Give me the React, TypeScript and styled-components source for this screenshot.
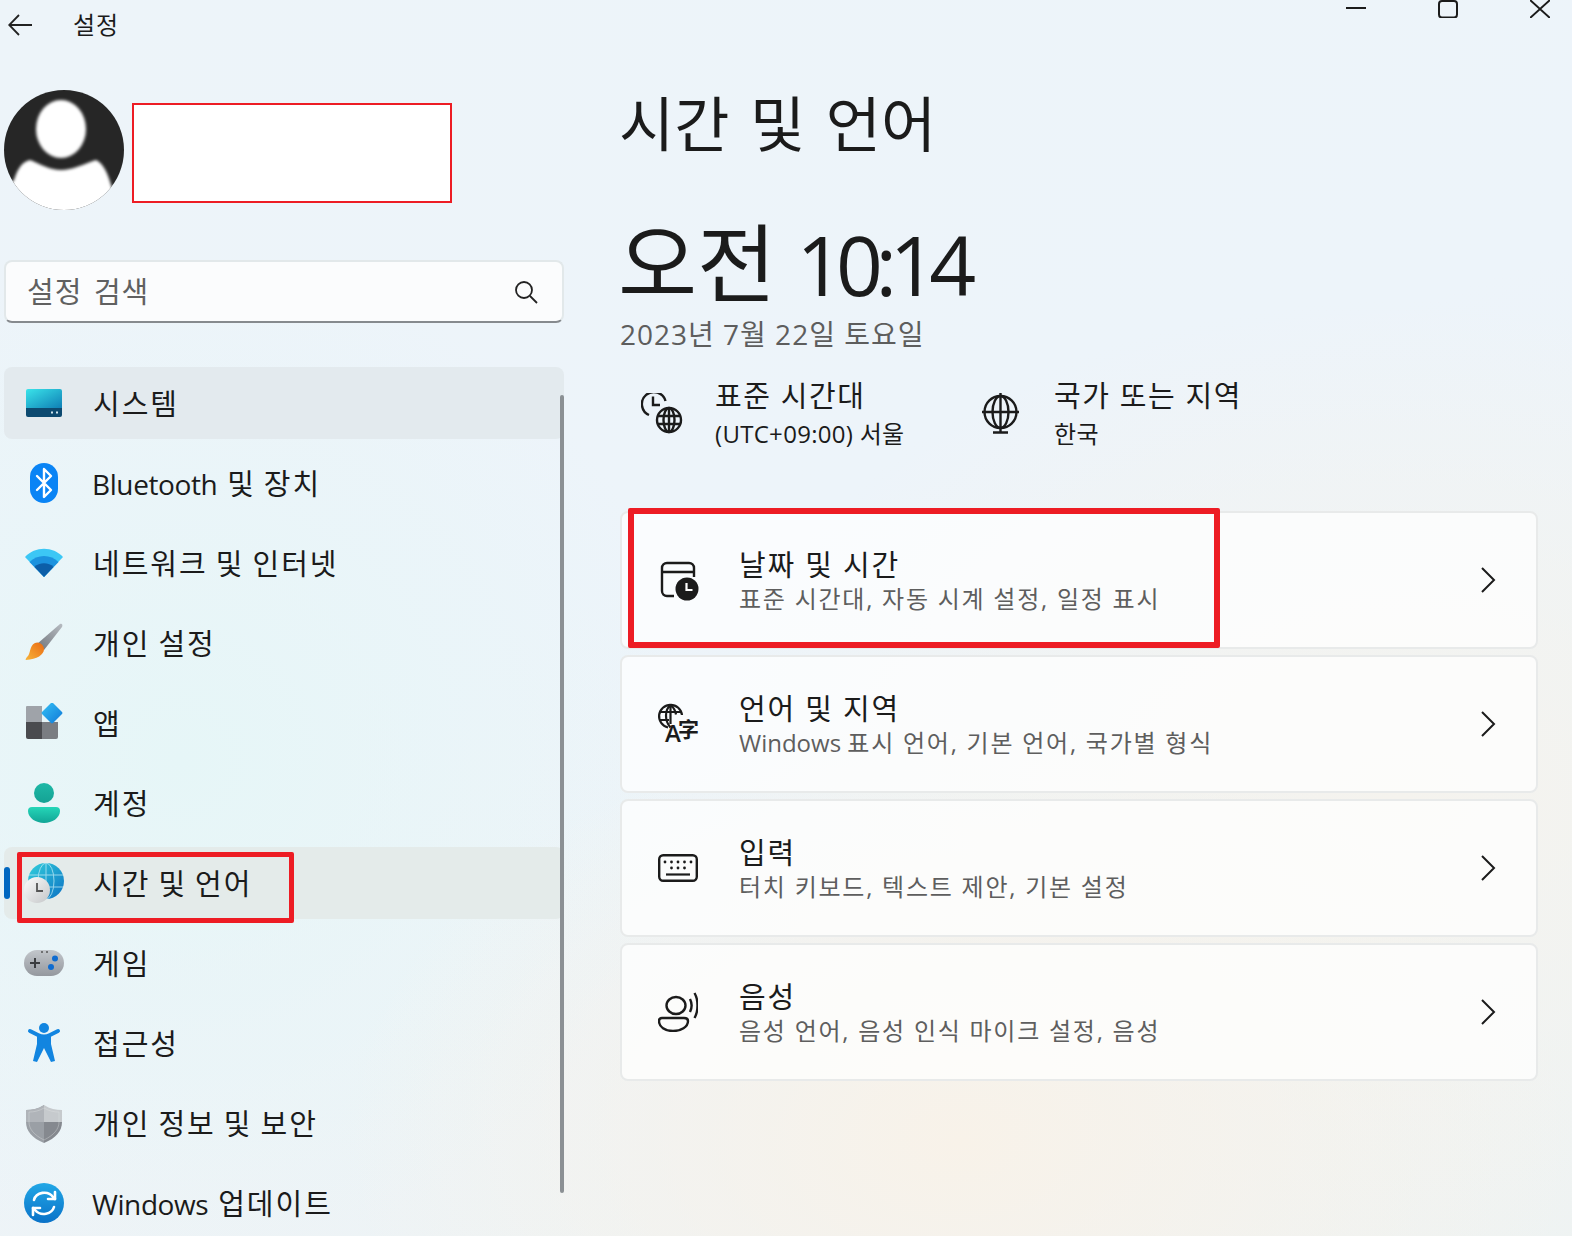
import React, { FC, ReactNode } from 'react';
import styled, { createGlobalStyle } from 'styled-components';

const GlobalStyle = createGlobalStyle`
  html, body {
    margin: 0;
    padding: 0;
  }
  body {
    font-family: "Open Sans", "Noto Sans CJK KR", sans-serif;
    color: #1b1b1b;
  }
`;

const Root = styled.div`
  position: relative;
  width: 1572px;
  height: 1236px;
  overflow: hidden;
  display: flex;
  flex-direction: column;
  background:
    radial-gradient(620px 420px at 960px 1140px, #f8f2e9 0%, rgba(248, 242, 233, 0) 100%),
    radial-gradient(700px 500px at 1400px 800px, #f5f3ee 0%, rgba(245, 243, 238, 0) 100%),
    radial-gradient(520px 500px at 180px 760px, #e6f6f7 0%, rgba(230, 246, 247, 0) 100%),
    linear-gradient(160deg, #edf4f9 0%, #edf4fa 45%, #eef3f3 100%);
`;

const TitleBar = styled.div`
  height: 50px;
  display: flex;
  align-items: flex-start;
  flex: none;
`;

const BackButton = styled.div`
  width: 73px;
  height: 50px;
  padding: 14px 0 0 8px;
  box-sizing: border-box;
  flex: none;
`;

const AppName = styled.div`
  font-size: 24px;
  line-height: 50px;
  letter-spacing: 1px;
  flex: 1;
`;

const WindowControls = styled.div`
  display: flex;
  gap: 72px;
  padding-right: 22px;
`;

const Columns = styled.div`
  flex: 1;
  display: flex;
  min-height: 0;
`;

const Sidebar = styled.aside`
  position: relative;
  width: 566px;
  flex: none;
  padding-left: 4px;
  box-sizing: border-box;
`;

const Profile = styled.div`
  display: flex;
  align-items: center;
  gap: 8px;
  margin-top: 40px;
`;

const RedactedName = styled.div`
  width: 320px;
  height: 100px;
  margin-top: 6px;
  box-sizing: border-box;
  background: #fff;
  border: 2px solid #ed1c24;
`;

const SearchBox = styled.div`
  margin: 50px 0 44px 0;
  width: 560px;
  height: 63px;
  box-sizing: border-box;
  display: flex;
  align-items: center;
  justify-content: space-between;
  padding: 0 24px 0 21px;
  background: #fbfcfd;
  border: 2px solid #e2e8ea;
  border-bottom: 2px solid #868a8e;
  border-radius: 8px;
`;

const SearchText = styled.span`
  font-size: 29px;
  letter-spacing: 1px;
  word-spacing: 3px;
  color: #606060;
  padding-bottom: 4px;
`;

const Nav = styled.nav`
  display: flex;
  flex-direction: column;
  gap: 8px;
  width: 560px;
`;

const NavRow = styled.div<{ $active?: boolean; $selected?: boolean }>`
  position: relative;
  height: 72px;
  flex: none;
  display: flex;
  align-items: center;
  gap: 29px;
  padding-left: 20px;
  border-radius: 8px;
  background: ${({ $active, $selected }) =>
    $active ? '#e3eaee' : $selected ? '#e4ebea' : 'transparent'};
`;

const NavIcon = styled.span`
  width: 40px;
  height: 40px;
  flex: none;
  display: block;
`;

const NavLabel = styled.span`
  font-size: 29px;
  line-height: 70px;
  letter-spacing: 2px;
  word-spacing: -1.5px;
  padding-top: 2px;
  white-space: nowrap;
`;

const NavLatin = styled.span`
  margin-left: -1px;
  font-size: 28px;
  letter-spacing: -0.4px;
  word-spacing: 3px;
`;

const Accent = styled.span`
  position: absolute;
  left: 0;
  top: 20px;
  width: 6px;
  height: 32px;
  border-radius: 3px;
  background: #0067c0;
`;

const NavHighlight = styled.div`
  position: absolute;
  left: 17px;
  top: 852px;
  width: 277px;
  height: 71px;
  box-sizing: border-box;
  border: 5px solid #ed1c24;
  border-radius: 2px;
`;

const ScrollThumb = styled.div`
  position: absolute;
  left: 560px;
  top: 345px;
  width: 4px;
  height: 798px;
  border-radius: 2px;
  background: #8b9094;
`;

const Main = styled.main`
  flex: 1;
  padding: 0 34px 0 54px;
  min-width: 0;
`;

const PageTitle = styled.h1`
  margin: 32px 0 0 -1px;
  font-size: 60px;
  line-height: 84px;
  font-weight: 400;
  word-spacing: 5px;
`;

const Clock = styled.div`
  margin: 47px 0 0 -2px;
  font-size: 86px;
  line-height: 100px;
  word-spacing: -2px;
`;

const ClockDigits = styled.span`
  font-size: 82px;
  letter-spacing: -7.4px;
`;

const DateLine = styled.div`
  font-size: 28px;
  line-height: 40px;
  letter-spacing: 1px;
  color: #5d5d5d;
`;

const InfoRow = styled.div`
  display: flex;
  margin-top: 22px;
`;

const InfoBlock = styled.div<{ $width: number }>`
  width: ${({ $width }) => $width}px;
  display: flex;
  align-items: center;
  padding-left: 21px;
  box-sizing: border-box;
  gap: 30px;
`;

const InfoText = styled.div`
  display: flex;
  flex-direction: column;
  padding-bottom: 2px;
`;

const InfoTitle = styled.span`
  font-size: 29px;
  line-height: 40px;
  letter-spacing: 1.6px;
  white-space: nowrap;
`;

const InfoValue = styled.span`
  font-size: 24px;
  line-height: 36px;
  letter-spacing: 0.3px;
  white-space: nowrap;
`;

const CardList = styled.div`
  position: relative;
  margin-top: 57px;
  display: flex;
  flex-direction: column;
  gap: 6px;
`;

const Card = styled.div`
  height: 138px;
  box-sizing: border-box;
  display: flex;
  align-items: center;
  padding: 0 40px 0 36px;
  background: rgba(255, 255, 255, 0.72);
  border: 2px solid #e8eaea;
  border-radius: 8px;
`;

const CardIcon = styled.span`
  width: 40px;
  height: 40px;
  flex: none;
`;

const CardText = styled.div`
  flex: 1;
  margin-left: 41px;
  padding-bottom: 2px;
  display: flex;
  flex-direction: column;
`;

const CardTitle = styled.span`
  font-size: 29px;
  line-height: 38px;
  letter-spacing: 1.8px;
  white-space: nowrap;
`;

const CardSub = styled.span`
  font-size: 24px;
  line-height: 29px;
  letter-spacing: 1.75px;
  color: #5e5e5e;
  white-space: nowrap;
`;

const SubLatin = styled.span`
  letter-spacing: 0;
`;

const CardHighlight = styled.div`
  position: absolute;
  left: 8px;
  top: -3px;
  width: 592px;
  height: 140px;
  box-sizing: border-box;
  border: 6px solid #ed1c24;
  border-radius: 2px;
`;

const BackArrow = () => (
  <svg width="24" height="22" viewBox="0 0 24 22" fill="none" stroke="#222" strokeWidth="1.8">
    <path d="M24 11H1.5M11 1 1.2 11 11 21" />
  </svg>
);

const WindowIcons = () => (
  <WindowControls>
    <svg width="20" height="18" viewBox="0 0 20 18" fill="none" stroke="#1b1b1b" strokeWidth="2">
      <path d="M0 8h20" />
    </svg>
    <svg width="20" height="18" viewBox="0 0 20 18" fill="none" stroke="#1b1b1b" strokeWidth="2">
      <rect x="1" y="1" width="18" height="16.500" rx="3" />
    </svg>
    <svg width="20" height="18" viewBox="0 0 20 18" fill="none" stroke="#1b1b1b" strokeWidth="2">
      <path d="M0 0 20 18M20 0 0 18" />
    </svg>
  </WindowControls>
);

const Avatar = () => (
  <svg width="120" height="120" viewBox="0 0 120 120">
    <defs>
      <clipPath id="avatarClip">
        <ellipse cx="60" cy="60" rx="60" ry="60" />
      </clipPath>
      <filter id="avatarBlur">
        <feGaussianBlur stdDeviation="1.6" />
      </filter>
    </defs>
    <g clipPath="url(#avatarClip)">
      <rect width="120" height="120" fill="#262626" />
      <g filter="url(#avatarBlur)" fill="#fff">
        <ellipse cx="57" cy="39" rx="25" ry="29" />
        <path d="M10 90C14 78 18 72 26 70 36 74 46 80 57 80 68 80 80 74 92 70 100 74 104 84 108 98V130H0V100Z" />
      </g>
    </g>
  </svg>
);

const SearchIcon = () => (
  <svg width="24" height="24" viewBox="0 0 24 24" fill="none" stroke="#222" strokeWidth="1.8">
    <circle cx="10" cy="10" r="8" />
    <path d="m16 16 7 7" />
  </svg>
);

const SystemIcon = () => (
  <svg viewBox="0 0 40 40" width="40" height="40">
    <defs>
      <linearGradient id="sysG" x1="0" y1="0" x2="1" y2="1">
        <stop offset="0" stopColor="#3ae4ea" />
        <stop offset="1" stopColor="#0f7fb5" />
      </linearGradient>
    </defs>
    <path d="M2 8a2 2 0 0 1 2-2h32a2 2 0 0 1 2 2v17H2Z" fill="url(#sysG)" />
    <path d="M2 25h36v7a2 2 0 0 1-2 2H4a2 2 0 0 1-2-2Z" fill="#0d4a70" />
    <rect x="27" y="28.500" width="2" height="2" fill="#cfe6ee" />
    <rect x="32" y="28.500" width="2" height="2" fill="#cfe6ee" />
  </svg>
);

const BluetoothIcon = () => (
  <svg viewBox="0 0 40 40" width="40" height="40">
    <rect x="6" y="0" width="28" height="40" rx="14" fill="#0a84f5" />
    <path d="m13 13 14 14-7 7V6l7 7-14 14" fill="none" stroke="#fff" strokeWidth="2.400" strokeLinejoin="round" strokeLinecap="round" />
  </svg>
);

const WifiIcon = () => (
  <svg viewBox="0 0 40 40" width="40" height="40">
    <path d="M1 14C11 3 29 3 39 14L20 34Z" fill="#3cc7f5" />
    <path d="M5.500 19C13 11 27 11 34.500 19L20 34Z" fill="#1c92de" />
    <path d="M10.500 24C15 19 25 19 29.500 24L20 34Z" fill="#0c5ea8" />
  </svg>
);

const BrushIcon = () => (
  <svg viewBox="0 0 40 40" width="40" height="40">
    <defs>
      <linearGradient id="brushG" x1="0" y1="1" x2="1" y2="0">
        <stop offset="0" stopColor="#70757b" />
        <stop offset="1" stopColor="#b7bcc2" />
      </linearGradient>
      <linearGradient id="tipG" x1="0" y1="1" x2="1" y2="0">
        <stop offset="0" stopColor="#f7b43a" />
        <stop offset="1" stopColor="#ea6a12" />
      </linearGradient>
    </defs>
    <path d="M36 1c2-1 3 1 2 3L20 27l-7-6Z" fill="url(#brushG)" />
    <path d="M11 20c4-2 9 2 9 6 0 6-7 10-18 11-1 0 0-2 1-3 4-3 2-11 8-14Z" fill="url(#tipG)" />
  </svg>
);

const AppsIcon = () => (
  <svg viewBox="0 0 40 40" width="40" height="40">
    <defs>
      <linearGradient id="appsG" x1="0" y1="0" x2="1" y2="1">
        <stop offset="0" stopColor="#35c1f5" />
        <stop offset="1" stopColor="#0f78d8" />
      </linearGradient>
    </defs>
    <path d="M3 3h15v16H2V4a1 1 0 0 1 1-1Z" fill="#9fa3a9" />
    <path d="M2 19h16v17H4a2 2 0 0 1-2-2Z" fill="#4a4b4f" />
    <path d="M18 19h16v15a2 2 0 0 1-2 2H18Z" fill="#7a7d82" />
    <path d="M29 0 38 9a1.500 1.500 0 0 1 0 2L29 20a1.500 1.500 0 0 1-2 0L18 11a1.500 1.500 0 0 1 0-2L27 0a1.500 1.500 0 0 1 2 0Z" fill="url(#appsG)" />
  </svg>
);

const AccountIcon = () => (
  <svg viewBox="0 0 40 40" width="40" height="40">
    <defs>
      <linearGradient id="acctG" x1="0" y1="0" x2="0" y2="1">
        <stop offset="0" stopColor="#1eb8a6" />
        <stop offset="1" stopColor="#14a294" />
      </linearGradient>
      <linearGradient id="acctB" x1="0" y1="0" x2="0" y2="1">
        <stop offset="0" stopColor="#25d6b8" />
        <stop offset="1" stopColor="#11a596" />
      </linearGradient>
    </defs>
    <circle cx="20" cy="10" r="10" fill="url(#acctG)" />
    <path d="M8 24h24a4 4 0 0 1 4 4c0 7-8 12-16 12S4 35 4 28a4 4 0 0 1 4-4Z" fill="url(#acctB)" />
  </svg>
);

const TimeIcon = () => (
  <svg viewBox="0 0 40 40" width="40" height="40">
    <defs>
      <linearGradient id="globeG" x1="0" y1="0" x2="1" y2="1">
        <stop offset="0" stopColor="#33d0dc" />
        <stop offset="1" stopColor="#0c72c4" />
      </linearGradient>
      <linearGradient id="clockG" x1="0" y1="0" x2="1" y2="1">
        <stop offset="0" stopColor="#fdfdfd" />
        <stop offset="1" stopColor="#c4c6c8" />
      </linearGradient>
    </defs>
    <circle cx="22" cy="18" r="18" fill="url(#globeG)" />
    <g fill="none" stroke="#bfeaf5" strokeWidth="1" opacity="0.75">
      <ellipse cx="22" cy="18" rx="8" ry="18" />
      <path d="M22 0v36M5 12h34M5 24h34" />
    </g>
    <circle cx="13" cy="27" r="13" fill="url(#clockG)" />
    <path d="M13 20v8h6" fill="none" stroke="#555" strokeWidth="1.800" />
  </svg>
);

const GameIcon = () => (
  <svg viewBox="0 0 40 40" width="40" height="40">
    <defs>
      <linearGradient id="padG" x1="0" y1="0" x2="0" y2="1">
        <stop offset="0" stopColor="#c2c6cb" />
        <stop offset="1" stopColor="#94989e" />
      </linearGradient>
    </defs>
    <rect x="0" y="7" width="40" height="26" rx="13" fill="url(#padG)" />
    <path d="M11 15v10M6 20h10" stroke="#3b3d40" strokeWidth="2" />
    <circle cx="31" cy="15.500" r="3" fill="#0f6cd0" />
    <circle cx="27" cy="24" r="3" fill="#0f6cd0" />
    <path d="M17 9h2M22 9h2" stroke="#555" strokeWidth="1.500" />
  </svg>
);

const AccessIcon = () => (
  <svg viewBox="0 0 40 40" width="40" height="40">
    <circle cx="20" cy="5" r="5" fill="#1285e0" />
    <path d="M6 8 14 12c4 2 8 2 12 0l8-4" fill="none" stroke="#1285e0" strokeWidth="4" strokeLinecap="round" />
    <path d="M13 12h14v9l4 17-4 1-7-14-7 14-4-1 4-17Z" fill="#1285e0" strokeLinejoin="round" />
  </svg>
);

const ShieldIcon = () => (
  <svg viewBox="0 0 40 40" width="40" height="40">
    <path d="M20 2C14 6 8 7 2 7v12c0 9 6 16 18 21V2Z" fill="#9a9fa5" />
    <path d="M20 2c6 4 12 5 18 5v12H20Z" fill="#c6cacd" />
    <path d="M38 19c0 9-6 16-18 21V19Z" fill="#85898f" />
    <path d="M2 19h18V2C14 6 8 7 2 7Z" fill="#b0b4b9" />
    <path d="M20 5c-5 3-10 4-15 4v10c0 7 5 13 15 18 10-5 15-11 15-18V9c-5 0-10-1-15-4Z" fill="none" stroke="#e2e4e6" strokeWidth="0.700" opacity="0.5" />
  </svg>
);

const UpdateIcon = () => (
  <svg viewBox="0 0 40 40" width="40" height="40">
    <defs>
      <linearGradient id="updG" x1="0" y1="0" x2="0" y2="1">
        <stop offset="0" stopColor="#22a7e6" />
        <stop offset="1" stopColor="#0a72c8" />
      </linearGradient>
    </defs>
    <circle cx="20" cy="20" r="20" fill="url(#updG)" />
    <g fill="none" stroke="#fff" strokeWidth="2.600" strokeLinecap="round" strokeLinejoin="round">
      <path d="M10 17c2-8 14-10 19-3l2 2" />
      <path d="M31 9v7h-7" />
      <path d="M30 24c-2 7-13 10-19 3l-2-2" />
      <path d="M9 32v-7h7" />
    </g>
  </svg>
);

const TimezoneIcon = () => (
  <svg viewBox="0 0 44 44" width="44" height="44" fill="none" stroke="#1b1b1b" strokeWidth="2.400">
    <path d="M8 22A12 12 0 1 1 24.500 8" />
    <path d="M12 3.500v8.500h7" />
    <circle cx="28" cy="27" r="12" />
    <ellipse cx="28" cy="27" rx="5.500" ry="12" />
    <path d="M28 15v24M17 23h22M17 31h22" />
  </svg>
);

const GlobeStandIcon = () => (
  <svg viewBox="0 0 44 44" width="44" height="44" fill="none" stroke="#1b1b1b" strokeWidth="2.400">
    <circle cx="20.500" cy="19" r="16" />
    <ellipse cx="20.500" cy="19" rx="8" ry="16" />
    <path d="M2 19h37M20.500 0v39M13 39.500h15" />
  </svg>
);

const CalendarClockIcon = () => (
  <svg viewBox="0 0 40 40" width="40" height="40" fill="none" overflow="visible">
    <g transform="translate(1 0)">
      <path d="M15 36H8a5 5 0 0 1-5-5V8a5 5 0 0 1 5-5h22a5 5 0 0 1 5 5v9M3 12h32" stroke="#1b1b1b" strokeWidth="2.400" />
      <circle cx="28" cy="29" r="11.500" fill="#1b1b1b" />
      <path d="M27.500 23v7h6" stroke="#fff" strokeWidth="2.200" />
    </g>
  </svg>
);

const LanguageIcon = () => (
  <svg viewBox="0 0 40 40" width="40" height="40" overflow="visible">
    <g fill="none" stroke="#1b1b1b" strokeWidth="2.200">
      <path d="M10 23.500A11.500 11.500 0 1 1 24 11" />
      <path d="M12.500 .5c-6 6-6 16 0 23M12.500 .5c3 3 5 6 5.500 10M12.500 .5V20M1 8h23M1 16h10" />
    </g>
    <text x="7" y="38" fontSize="24" fontFamily="Open Sans, sans-serif" fontWeight="600" fill="#1b1b1b">A</text>
    <text x="20" y="33" fontSize="21" fontFamily="Noto Sans CJK SC, sans-serif" fontWeight="700" fill="#1b1b1b">字</text>
  </svg>
);

const KeyboardIcon = () => (
  <svg viewBox="0 0 40 40" width="40" height="40" fill="none">
    <rect x="1.200" y="7.200" width="37.600" height="25.600" rx="4" stroke="#1b1b1b" strokeWidth="2.400" />
    <g fill="#1b1b1b">
      {[7, 13.500, 20, 26.500, 33].map((x) => (
        <circle key={x} cx={x} cy="14" r="1.400" />
      ))}
      {[13.500, 20, 26.500].map((x) => (
        <circle key={x} cx={x} cy="20" r="1.400" />
      ))}
    </g>
    <path d="M8 26.500h24" stroke="#1b1b1b" strokeWidth="2.200" />
  </svg>
);

const SpeechIcon = () => (
  <svg viewBox="0 0 40 40" width="40" height="40" fill="none" stroke="#1b1b1b" strokeWidth="2.400">
    <ellipse cx="18" cy="13.500" rx="9.500" ry="8.500" />
    <path d="M4 26h22c3 0 4 1 4 3 0 6-7 10-15 10S1 35 1 29c0-2 1-3 3-3Z" />
    <path d="M32 7c2 4 2 9 0 13M36.500 1c4 7 4 18 0 25" />
  </svg>
);

const Chevron = () => (
  <svg width="16" height="26" viewBox="0 0 16 26" fill="none" stroke="#1b1b1b" strokeWidth="2">
    <path d="m2 1 12 12L2 25" />
  </svg>
);

interface NavEntry {
  id: string;
  label: ReactNode;
  icon: ReactNode;
  active?: boolean;
  selected?: boolean;
}

const navEntries: NavEntry[] = [
  { id: 'system', label: '시스템', icon: <SystemIcon />, active: true },
  { id: 'bluetooth', label: <><NavLatin>Bluetooth </NavLatin>및 장치</>, icon: <BluetoothIcon /> },
  { id: 'network', label: '네트워크 및 인터넷', icon: <WifiIcon /> },
  { id: 'personal', label: '개인 설정', icon: <BrushIcon /> },
  { id: 'apps', label: '앱', icon: <AppsIcon /> },
  { id: 'account', label: '계정', icon: <AccountIcon /> },
  { id: 'time', label: '시간 및 언어', icon: <TimeIcon />, selected: true },
  { id: 'game', label: '게임', icon: <GameIcon /> },
  { id: 'access', label: '접근성', icon: <AccessIcon /> },
  { id: 'privacy', label: '개인 정보 및 보안', icon: <ShieldIcon /> },
  { id: 'update', label: <><NavLatin>Windows </NavLatin>업데이트</>, icon: <UpdateIcon /> },
];

const cards: { id: string; title: string; sub: ReactNode; icon: ReactNode }[] = [
  { id: 'date', title: '날짜 및 시간', sub: '표준 시간대, 자동 시계 설정, 일정 표시', icon: <CalendarClockIcon /> },
  { id: 'lang', title: '언어 및 지역', sub: <><SubLatin>Windows </SubLatin>표시 언어, 기본 언어, 국가별 형식</>, icon: <LanguageIcon /> },
  { id: 'input', title: '입력', sub: '터치 키보드, 텍스트 제안, 기본 설정', icon: <KeyboardIcon /> },
  { id: 'speech', title: '음성', sub: '음성 언어, 음성 인식 마이크 설정, 음성', icon: <SpeechIcon /> },
];

const App: FC = () => (
  <Root>
    <GlobalStyle />
    <TitleBar>
      <BackButton>
        <BackArrow />
      </BackButton>
      <AppName>설정</AppName>
      <WindowIcons />
    </TitleBar>
    <Columns>
      <Sidebar>
        <Profile>
          <Avatar />
          <RedactedName />
        </Profile>
        <SearchBox>
          <SearchText>설정 검색</SearchText>
          <SearchIcon />
        </SearchBox>
        <Nav>
          {navEntries.map((entry) => (
            <NavRow key={entry.id} $active={entry.active} $selected={entry.selected}>
              {entry.selected && <Accent />}
              <NavIcon>{entry.icon}</NavIcon>
              <NavLabel>{entry.label}</NavLabel>
            </NavRow>
          ))}
        </Nav>
        <ScrollThumb />
      </Sidebar>
      <Main>
        <PageTitle>시간 및 언어</PageTitle>
        <Clock>
          오전 <ClockDigits>10:14</ClockDigits>
        </Clock>
        <DateLine>2023년 7월 22일 토요일</DateLine>
        <InfoRow>
          <InfoBlock $width={339}>
            <TimezoneIcon />
            <InfoText>
              <InfoTitle>표준 시간대</InfoTitle>
              <InfoValue>(UTC+09:00) 서울</InfoValue>
            </InfoText>
          </InfoBlock>
          <InfoBlock $width={500}>
            <GlobeStandIcon />
            <InfoText>
              <InfoTitle>국가 또는 지역</InfoTitle>
              <InfoValue>한국</InfoValue>
            </InfoText>
          </InfoBlock>
        </InfoRow>
        <CardList>
          {cards.map((card) => (
            <Card key={card.id}>
              <CardIcon>{card.icon}</CardIcon>
              <CardText>
                <CardTitle>{card.title}</CardTitle>
                <CardSub>{card.sub}</CardSub>
              </CardText>
              <Chevron />
            </Card>
          ))}
          <CardHighlight />
        </CardList>
      </Main>
    </Columns>
    <NavHighlight />
  </Root>
);

export default App;
